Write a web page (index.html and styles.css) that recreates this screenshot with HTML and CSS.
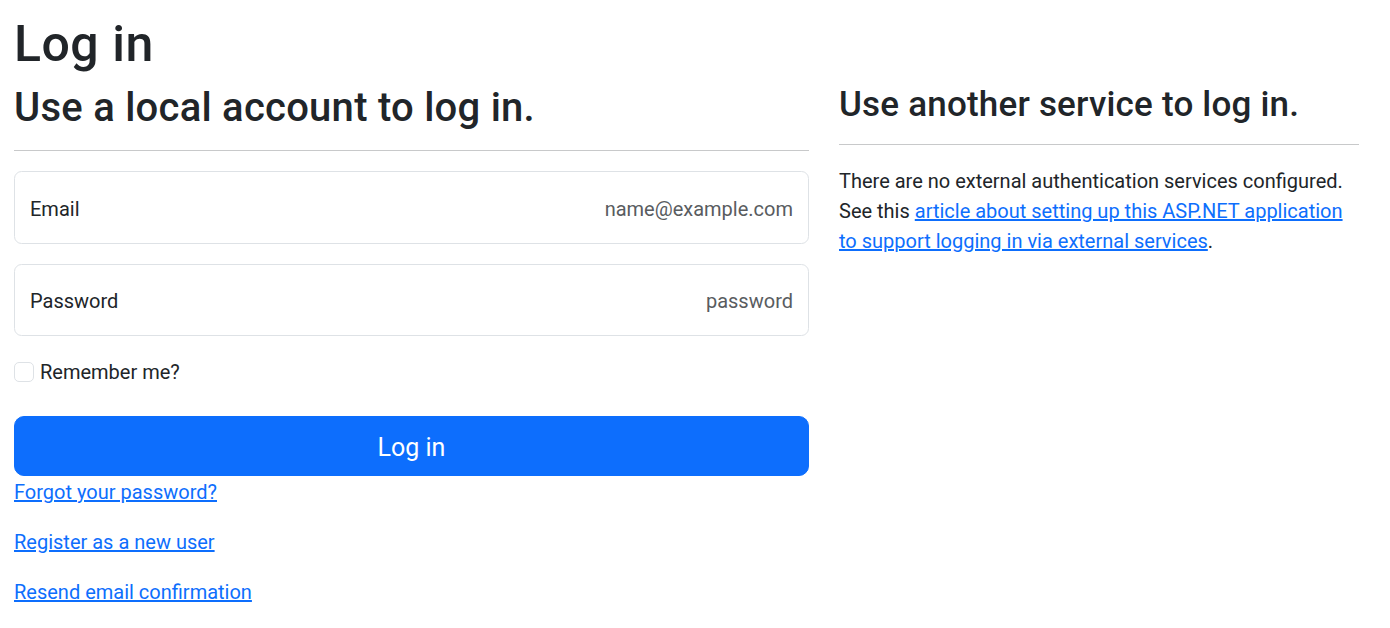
FILE: index.html
```
<!DOCTYPE html>
<html lang="en">
<head>
<meta charset="utf-8">
<title>Log in</title>
<link rel="stylesheet" href="styles.css">
</head>
<body>
<main class="page">
  <h1 class="title">Log in</h1>
  <div class="row">
    <section class="col-local">
      <form class="login-form" action="#" onsubmit="return false;">
        <h2 class="section-heading">Use a local account to log in.</h2>
        <hr class="divider">
        <div class="field">
          <label class="field-label" for="email">Email</label>
          <input class="field-input" id="email" type="email" placeholder="name@example.com" autocomplete="username">
        </div>
        <div class="field">
          <label class="field-label" for="password">Password</label>
          <input class="field-input" id="password" type="password" placeholder="password" autocomplete="current-password">
        </div>
        <div class="check-row">
          <input class="check-input" id="remember" type="checkbox">
          <label class="check-label" for="remember">Remember me?</label>
        </div>
        <button class="btn-primary" type="submit">Log in</button>
        <p class="link-row"><a class="link" href="#">Forgot your password?</a></p>
        <p class="link-row"><a class="link" href="#">Register as a new user</a></p>
        <p class="link-row"><a class="link" href="#">Resend email confirmation</a></p>
      </form>
    </section>
    <section class="col-external">
      <h3 class="sub-heading">Use another service to log in.</h3>
      <hr class="divider">
      <p class="note">There are no external authentication services configured. See this <a class="link" href="#">article about setting up this ASP.NET application to support logging in via external services</a>.</p>
    </section>
  </div>
</main>
</body>
</html>
```
FILE: styles.css
```
* { box-sizing: border-box; }

html, body {
  margin: 0;
  padding: 0;
  background: #ffffff;
}

body {
  font-family: Roboto, "Liberation Sans", sans-serif;
  font-size: 20px;
  line-height: 30px;
  color: #212529;
}

.page {
  padding: 12px 31px 0 14px;
}

.title {
  margin: 0 0 10px;
  padding-top: 4px;
  font-size: 50px;
  line-height: 56px;
  font-weight: 500;
  letter-spacing: 0.5px;
}

.row {
  display: flex;
  gap: 30px;
  align-items: flex-start;
}

.col-local {
  width: 795px;
  flex: none;
}

.col-external {
  width: 520px;
  flex: none;
}

.section-heading {
  margin: 0;
  padding-top: 4px;
  font-size: 40px;
  line-height: 44px;
  font-weight: 500;
  letter-spacing: 0.25px;
}

.sub-heading {
  margin: 0;
  padding-top: 3px;
  font-size: 35px;
  line-height: 39px;
  font-weight: 500;
  letter-spacing: 0.2px;
}

.divider {
  margin: 20px 0;
  border: 0;
  border-top: 1px solid #c8c9ca;
  height: 0;
}

.field {
  display: flex;
  align-items: center;
  height: 72.5px;
  margin-bottom: 20px;
  padding: 3px 15px 0;
  border: 1px solid #dee2e6;
  border-radius: 7.5px;
  background: #ffffff;
}

.field-label {
  flex: none;
  color: #212529;
  font-size: 20px;
  line-height: 30px;
}

.field-input {
  flex: 1;
  min-width: 0;
  border: 0;
  outline: none;
  padding: 0;
  margin: 0;
  background: transparent;
  font-family: inherit;
  font-size: 20px;
  line-height: 30px;
  color: #212529;
  text-align: right;
}

.field-input::placeholder {
  color: #595c5f;
  opacity: 1;
}

.check-row {
  display: flex;
  align-items: center;
  gap: 6px;
  height: 30px;
  margin-bottom: 30px;
}

.check-input {
  appearance: none;
  -webkit-appearance: none;
  width: 20px;
  height: 20px;
  margin: 1px 0 0;
  flex: none;
  border: 1px solid #dee2e6;
  border-radius: 5px;
  background: #ffffff;
}

.check-label {
  padding-top: 2px;
  font-size: 20px;
  line-height: 30px;
}

.btn-primary {
  display: block;
  width: 100%;
  height: 60px;
  padding: 12px 20px 8px;
  border: 1px solid #0d6efd;
  border-radius: 10px;
  background: #0d6efd;
  color: #ffffff;
  font-family: inherit;
  font-size: 25px;
  line-height: 37.5px;
  font-weight: 400;
  cursor: pointer;
}

.link-row {
  margin: 0 0 19px;
  padding-top: 1px;
}

.link {
  color: #0d6efd;
  text-decoration: underline;
}

.note {
  margin: 0;
  padding-top: 1px;
}
```
